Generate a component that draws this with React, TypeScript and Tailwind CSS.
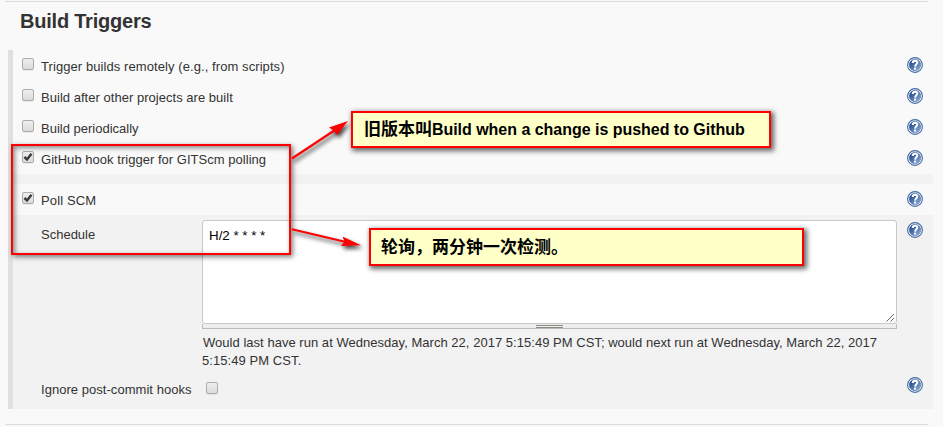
import type { ReactNode } from "react";

function HelpIcon() {
  return (
    <svg width="16" height="16" viewBox="0 0 16 16" className="block shrink-0" role="img" aria-label="Help">
      <defs>
        <linearGradient id="help-fill" x1="0" y1="0" x2="1" y2="1">
          <stop offset="0.25" stopColor="#2b5593" />
          <stop offset="1" stopColor="#9ab8dc" />
        </linearGradient>
      </defs>
      <circle cx="8" cy="8" r="7.4" fill="#fff" stroke="#4369a3" strokeWidth="1.1" />
      <circle cx="8" cy="8" r="5.8" fill="url(#help-fill)" stroke="#4a70aa" strokeWidth="0.5" />
      <path d="M5.7 6C5.8 4.4 6.7 3.7 8.1 3.7C9.5 3.7 10.3 4.5 10.3 5.6C10.3 7.3 8.2 7.4 8.1 9.6" fill="none" stroke="#fff" strokeWidth="2" />
      <rect x="7" y="10.6" width="2.1" height="2" fill="#fff" />
    </svg>
  );
}

function Checkbox({ checked = false }: { checked?: boolean }) {
  return (
    <span
      role="checkbox"
      aria-checked={checked}
      className="block h-3 w-3 shrink-0 rounded-[2px] border border-[#acacac] bg-linear-to-b from-[#eeeeee] to-[#dcdcdc] shadow-[0_1px_0_rgba(0,0,0,0.06)]"
    >
      {checked && (
        <svg width="10" height="10" viewBox="0 0 10 10" className="block">
          <path d="M1.4 5L4 7.4L8.5 1.7" fill="none" stroke="#3c3c3c" strokeWidth="2.5" />
        </svg>
      )}
    </span>
  );
}

function TriggerRow({ children, checked }: { children: ReactNode; checked?: boolean }) {
  return (
    <div className="flex h-[31px] items-start bg-[#f9f9f9] pr-[10px] pl-[9px]">
      <div className="pt-[8px]">
        <Checkbox checked={checked} />
      </div>
      <div className="flex-1 pt-[8px] pl-[7px] leading-[18px] whitespace-nowrap">{children}</div>
      <div className="pt-[7px]">
        <HelpIcon />
      </div>
    </div>
  );
}

function Arrows() {
  return (
    <svg width="100" height="160" viewBox="280 100 100 160" className="absolute top-[100px] left-[280px] drop-shadow-[2px_3px_2px_rgba(0,0,0,0.75)]">
      <g stroke="#f00" strokeWidth="2.1" fill="#f00">
        <path d="M292 158.5L335 130" />
        <path d="M292 229.3L345 241.8" />
      </g>
      <g fill="#f00">
        <path d="M348 121L329 127.6L333.5 130.5L337 135Z" />
        <path d="M361 245.2L342.5 236.5L344.5 241.5L341 246Z" />
      </g>
    </svg>
  );
}

export default function App() {
  return (
    <main className="relative h-[427px] w-[943px] overflow-hidden bg-[#f9f9f9] pt-px font-['Liberation_Sans',Arial,sans-serif] text-[13px] text-[#333]">
      <div className="ml-[5px] h-px w-[923px] bg-[#dcdcdc]" />
      <h2 className="h-12 pt-[7px] pl-5 text-[20px] leading-[24px] font-bold tracking-[-0.22px]">Build Triggers</h2>
      <section className="ml-2 h-[359px] w-[925px] border-l-[5px] border-[#e0e0e0] bg-[#f2f2f2]">
        <TriggerRow><span className="tracking-[0.08px]">Trigger builds remotely (e.g., from scripts)</span></TriggerRow>
        <TriggerRow><span className="tracking-[0.03px]">Build after other projects are built</span></TriggerRow>
        <TriggerRow>Build periodically</TriggerRow>
        <TriggerRow checked><span className="tracking-[0.03px]">GitHub hook trigger for GITScm polling</span></TriggerRow>
        <div className="h-[10px]" />
        <TriggerRow checked><span className="tracking-[0.12px]">Poll SCM</span></TriggerRow>
        <div className="flex h-[159px] pt-[5px] pr-[10px] pl-7">
          <div className="w-[161px] pt-[6px] leading-[18px]">Schedule</div>
          <div className="w-[695px]">
            <div className="relative h-[104px] rounded-[3px] border border-[#c8c8c8] bg-white pt-[6px] pl-[6px] text-[13.33px] leading-[18px] text-black">
              H/2 * * * *
              <svg width="9" height="9" viewBox="0 0 9 9" className="absolute right-px bottom-px">
                <path d="M0.5 8.5L8 1M4.5 8.5L8 5" stroke="#666" strokeWidth="1" />
              </svg>
            </div>
            <div className="flex h-[5px] justify-center border-x border-b border-[#bbb] bg-[#eee]">
              <div className="h-[3px] w-[27px] translate-y-px border-y border-[#888c85]" />
            </div>
            <p className="pt-[5px] pl-px leading-[18px] whitespace-nowrap">
              <span className="tracking-[0.03px]">Would last have run at Wednesday, March 22, 2017 5:15:49 PM CST; would next run at Wednesday, March 22, 2017</span>
              <br />
              <span className="-ml-px tracking-[0.07px]">5:15:49 PM CST.</span>
            </p>
          </div>
          <div className="ml-[10px] pt-[2px]">
            <HelpIcon />
          </div>
        </div>
        <div className="flex h-[35px] items-start pr-[10px] pl-7">
          <div className="w-[165px] pt-[7px] leading-[18px] tracking-[0.04px]">Ignore post-commit hooks</div>
          <div className="flex-1 pt-[8px]"><Checkbox /></div>
          <div className="pt-[3px]"><HelpIcon /></div>
        </div>
      </section>
      <div className="mt-[15px] ml-[5px] h-px w-[923px] bg-[#dcdcdc]" />

      <div className="absolute top-[144px] left-[11px] h-[111px] w-[280px] border-2 border-[#f00] shadow-[2px_2px_5px_rgba(0,0,0,0.5),inset_2px_2px_5px_rgba(0,0,0,0.45)]" />
      <Arrows />
      <div className="absolute top-[111px] left-[351px] h-[37px] w-[420px] border-2 border-[#f00] bg-[#ffffc8] pl-[11px] font-['Liberation_Sans','Noto_Sans_CJK_SC',sans-serif] text-[16px] leading-[33px] font-bold tracking-[-0.025px] whitespace-nowrap text-black shadow-[2px_2px_5px_1px_rgba(0,0,0,0.6)]">
        <span className="text-[17px]">旧版本叫</span>Build when a change is pushed to Github
      </div>
      <div className="absolute top-[228px] left-[369px] h-[38px] w-[435px] border-2 border-[#f00] bg-[#ffffc8] pt-px pl-[10px] font-['Liberation_Sans','Noto_Sans_CJK_SC',sans-serif] text-[17px] leading-[34px] font-bold whitespace-nowrap text-black shadow-[2px_2px_5px_1px_rgba(0,0,0,0.6)]">
        轮询，两分钟一次检测。
      </div>
    </main>
  );
}
